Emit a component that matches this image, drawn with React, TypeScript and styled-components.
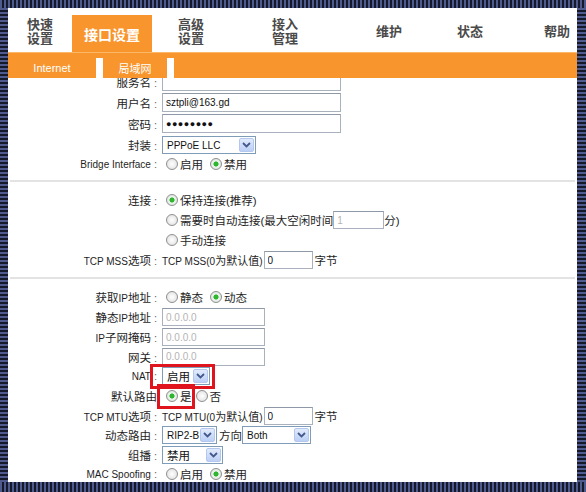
import styled, { createGlobalStyle } from "styled-components"

const ORANGE = "#f8952c"
const NAVY = "#4f5b8f"
const DARK = "#151a2b"

const GlobalStyle = createGlobalStyle`
  html, body {
    margin: 0;
    padding: 0;
    background: #ffffff;
  }
  body {
    font-family: "Liberation Sans", "Noto Sans CJK SC", sans-serif;
    font-size: 11.5px;
    color: #1e1e1e;
  }
`

const Frame = styled.div`
  width: 586px;
  height: 492px;
  box-sizing: border-box;
  padding: 8px 9px 10px 8px;
  background:
    repeating-linear-gradient(90deg, ${NAVY} 0 2px, ${DARK} 2px 4px) top left / 100% 8px no-repeat,
    repeating-linear-gradient(90deg, ${NAVY} 0 2px, ${DARK} 2px 4px) bottom left / 100% 10px no-repeat,
    repeating-linear-gradient(180deg, ${NAVY} 0 2px, ${DARK} 2px 4px) top left / 8px 100% no-repeat,
    repeating-linear-gradient(180deg, ${NAVY} 0 2px, ${DARK} 2px 4px) top right / 9px 100% no-repeat;
`

const Panel = styled.div`
  height: 100%;
  background: #ffffff;
  display: flex;
  flex-direction: column;
`

const NavBar = styled.div`
  height: 44px;
  display: flex;
  align-items: flex-end;
  flex-shrink: 0;
`

const NavItem = styled.div<{ $w: number; $right?: boolean }>`
  width: ${(p) => p.$w}px;
  height: 44px;
  box-sizing: border-box;
  padding-top: 4px;
  display: flex;
  align-items: center;
  justify-content: center;
  text-align: center;
  font-size: 13px;
  font-weight: bold;
  line-height: 14px;
  color: #4a4a4a;
  margin-left: ${(p) => (p.$right ? "auto" : "0")};
`

const ActiveTab = styled.div<{ $w: number }>`
  width: ${(p) => p.$w}px;
  height: 37px;
  background: ${ORANGE};
  color: #ffffff;
  font-size: 14px;
  font-weight: bold;
  display: flex;
  align-items: center;
  justify-content: center;
`

const SubBar = styled.div`
  background: ${ORANGE};
  border-top: 1px solid #fbb86a;
  padding-top: 5px;
  flex-shrink: 0;
`

const SubRow = styled.div`
  display: flex;
  gap: 7px;
  height: 20px;
  background: #ffffff;
`

const SubTab = styled.div<{ $w?: number }>`
  background: ${ORANGE};
  color: #ffffff;
  font-size: 11px;
  display: flex;
  align-items: center;
  justify-content: center;
  ${(p) => (p.$w ? `width: ${p.$w}px;` : "flex: 1;")}
`

const Content = styled.div`
  flex: 1;
  overflow: hidden;
`

const Form = styled.div`
  margin-top: -7px;
`

const Section = styled.div<{ $top: number; $bottom: number; $line?: boolean }>`
  padding: ${(p) => p.$top}px 0 ${(p) => p.$bottom}px;
  margin: 0 2px;
  border-bottom: ${(p) => (p.$line ? "2px solid #e3e3e3" : "none")};
`

const Row = styled.div<{ $h: number }>`
  height: ${(p) => p.$h}px;
  display: grid;
  grid-template-columns: 147px 1fr;
  column-gap: 5px;
  align-items: center;
`

const Label = styled.div`
  text-align: right;
  white-space: nowrap;
  color: #1e1e1e;
`

const Lat = styled.span`
  font-size: 10px;
`

const Colon = styled.span`
  color: #666;
  font-size: 11px;
  margin-left: 3px;
`

const Value = styled.div`
  display: flex;
  align-items: center;
  white-space: nowrap;
`

const TextBox = styled.input<{ $w: number; $h?: number; $muted?: boolean }>`
  width: ${(p) => p.$w}px;
  height: ${(p) => p.$h ?? 18}px;
  box-sizing: border-box;
  border: 1px solid #a9b1bd;
  border-top-color: #8f98a6;
  padding: 0 3px;
  margin: 0;
  font-family: "Liberation Sans", "Noto Sans CJK SC", sans-serif;
  font-size: 10px;
  color: ${(p) => (p.$muted ? "#b4b4b4" : "#111")};
  background: #fff;
  outline: none;
`

const Dots = styled.div<{ $w: number }>`
  width: ${(p) => p.$w}px;
  height: 19px;
  box-sizing: border-box;
  border: 1px solid #a9b1bd;
  border-top-color: #8f98a6;
  padding: 0 3px;
  display: flex;
  align-items: center;
  font-size: 9px;
  letter-spacing: 0.5px;
  color: #111;
`

const SelectBox = styled.div<{ $w: number }>`
  width: ${(p) => p.$w}px;
  height: 18px;
  box-sizing: border-box;
  border: 1px solid #7f9db9;
  background: #fff;
  display: flex;
  align-items: center;
  justify-content: space-between;
  padding: 0 1px 0 4px;
  color: #111;
`

const DropBtn = styled.span`
  width: 15px;
  height: 14px;
  box-sizing: border-box;
  border: 1px solid #b4c7ee;
  border-radius: 2px;
  background: linear-gradient(#e2ebfd, #bccff6);
  display: flex;
  align-items: center;
  justify-content: center;
`

const Option = styled.label<{ $gap?: number }>`
  display: inline-flex;
  align-items: center;
  margin-right: ${(p) => p.$gap ?? 3}px;
`

const Dot = styled.span<{ $on?: boolean }>`
  width: 12px;
  height: 12px;
  box-sizing: border-box;
  border-radius: 50%;
  border: 1px solid #8e8f8f;
  background: radial-gradient(circle at 50% 50%, ${(p) => (p.$on ? "#2fb52f 0 2.3px, #eaf6ea 2.8px" : "#ffffff 0")}, #dcdcdc 100%);
  margin: 0 2px 0 4px;
  flex-shrink: 0;
`

const Small = styled.span`
  font-size: 11px;
  margin-right: 1px;
`

const Unit = styled.span`
  margin-left: 2px;
`

const Mark = styled.span<{ $l: number; $t: number; $r: number; $b: number }>`
  position: relative;
  display: inline-flex;
  align-items: center;
  &::after {
    content: "";
    position: absolute;
    left: ${(p) => p.$l}px;
    top: ${(p) => p.$t}px;
    right: ${(p) => p.$r}px;
    bottom: ${(p) => p.$b}px;
    border: 3px solid #e0141c;
    pointer-events: none;
  }
`

const Chevron = () => (
  <svg width="9" height="6" viewBox="0 0 9 6">
    <path d="M1 1 L4.5 4.5 L8 1" fill="none" stroke="#44598a" strokeWidth="1.8" />
  </svg>
)

const Select = ({ w, children }: { w: number; children: React.ReactNode }) => (
  <SelectBox $w={w}>
    <span>{children}</span>
    <DropBtn>
      <Chevron />
    </DropBtn>
  </SelectBox>
)

const Radio = ({ on, children, gap }: { on?: boolean; children: React.ReactNode; gap?: number }) => (
  <Option $gap={gap}>
    <Dot $on={on} />
    {children}
  </Option>
)

const Field = ({ label, h, colon = true, children }: { label?: React.ReactNode; h: number; colon?: boolean; children?: React.ReactNode }) => (
  <Row $h={h}>
    <Label>
      {label}
      {label && colon && <Colon>:</Colon>}
    </Label>
    <Value>{children}</Value>
  </Row>
)

export default function App() {
  return (
    <>
      <GlobalStyle />
      <Frame>
        <Panel>
          <NavBar>
            <NavItem $w={64}>快速<br />设置</NavItem>
            <ActiveTab $w={80}>接口设置</ActiveTab>
            <NavItem $w={78}>高级<br />设置</NavItem>
            <NavItem $w={110}>接入<br />管理</NavItem>
            <NavItem $w={98}>维护</NavItem>
            <NavItem $w={64}>状态</NavItem>
            <NavItem $w={40} $right>帮助</NavItem>
          </NavBar>
          <SubBar>
            <SubRow>
              <SubTab $w={88}>Internet</SubTab>
              <SubTab $w={64}>局域网</SubTab>
              <SubTab />
            </SubRow>
          </SubBar>
          <Content>
            <Form>
              <Section $top={0} $bottom={8} $line>
                <Field label="服务名" h={21}>
                  <TextBox $w={179} $h={19} readOnly defaultValue="" />
                </Field>
                <Field label="用户名" h={21}>
                  <TextBox $w={179} $h={19} readOnly defaultValue="sztpli@163.gd" />
                </Field>
                <Field label="密码" h={21}>
                  <Dots $w={179}>●●●●●●●●</Dots>
                </Field>
                <Field label="封装" h={21}>
                  <Select w={94}><Lat>PPPoE LLC</Lat></Select>
                </Field>
                <Field label={<Lat>Bridge Interface</Lat>} h={17}>
                  <Radio>启用</Radio>
                  <Radio on>禁用</Radio>
                </Field>
              </Section>
              <Section $top={8} $bottom={7} $line>
                <Field label="连接" h={20}>
                  <Radio on>保持连接(推荐)</Radio>
                </Field>
                <Field h={20}>
                  <Radio gap={0}>需要时自动连接(最大空闲时间</Radio>
                  <TextBox $w={51} $muted readOnly defaultValue="1" />
                  <span>分)</span>
                </Field>
                <Field h={20}>
                  <Radio>手动连接</Radio>
                </Field>
                <Field label={<><Lat>TCP MSS</Lat>选项</>} h={20}>
                  <Small><Lat>TCP MSS(0</Lat>为默认值<Lat>)</Lat></Small>
                  <TextBox $w={49} readOnly defaultValue="0" />
                  <Unit>字节</Unit>
                </Field>
              </Section>
              <Section $top={8} $bottom={0}>
                <Field label={<>获取<Lat>IP</Lat>地址</>} h={20}>
                  <Radio>静态</Radio>
                  <Radio on>动态</Radio>
                </Field>
                <Field label={<>静态<Lat>IP</Lat>地址</>} h={20}>
                  <TextBox $w={103} $muted readOnly defaultValue="0.0.0.0" />
                </Field>
                <Field label={<><Lat>IP</Lat>子网掩码</>} h={20}>
                  <TextBox $w={103} $muted readOnly defaultValue="0.0.0.0" />
                </Field>
                <Field label="网关" h={19}>
                  <TextBox $w={103} $muted readOnly defaultValue="0.0.0.0" />
                </Field>
                <Field label={<Lat>NAT</Lat>} h={19}>
                  <Mark $l={-12} $t={-3} $r={-5} $b={-4}>
                    <Select w={48}>启用</Select>
                  </Mark>
                </Field>
                <Field label="默认路由" h={22} colon={false}>
                  <Mark $l={-5} $t={-4} $r={-3} $b={-5}>
                    <Radio on gap={0}>是</Radio>
                  </Mark>
                  <Radio>否</Radio>
                </Field>
                <Field label={<><Lat>TCP MTU</Lat>选项</>} h={18}>
                  <Small><Lat>TCP MTU(0</Lat>为默认值<Lat>)</Lat></Small>
                  <TextBox $w={49} readOnly defaultValue="0" />
                  <Unit>字节</Unit>
                </Field>
                <Field label="动态路由" h={20}>
                  <Select w={55}><Lat>RIP2-B</Lat></Select>
                  <Unit>方向</Unit>
                  <Select w={69}><Lat>Both</Lat></Select>
                </Field>
                <Field label="组播" h={19}>
                  <Select w={61}>禁用</Select>
                </Field>
                <Field label={<Lat>MAC Spoofing</Lat>} h={19}>
                  <Radio>启用</Radio>
                  <Radio on>禁用</Radio>
                </Field>
              </Section>
            </Form>
          </Content>
        </Panel>
      </Frame>
    </>
  )
}
